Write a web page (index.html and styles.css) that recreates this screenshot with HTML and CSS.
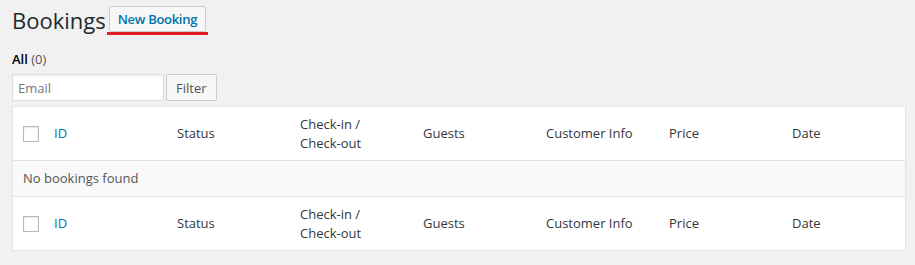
FILE: index.html
```html
<!DOCTYPE html>
<html>
<head>
<meta charset="utf-8">
<link rel="stylesheet" href="styles.css">
</head>
<body>
<div class="wrap">
  <div class="head">
    <h1 class="title">Bookings</h1>
    <a class="add-new">New Booking</a>
  </div>
  <div class="subsubsub"><span class="current">All</span> <span class="count">(0)</span></div>
  <div class="filters">
    <input class="email" type="text" placeholder="Email">
    <button class="btn">Filter</button>
  </div>
  <div class="table">
    <div class="row head-row">
      <div class="cell cb"><span class="check"></span></div>
      <div class="cell link">ID</div>
      <div class="cell">Status</div>
      <div class="cell">Check-in /<br>Check-out</div>
      <div class="cell">Guests</div>
      <div class="cell">Customer Info</div>
      <div class="cell">Price</div>
      <div class="cell">Date</div>
    </div>
    <div class="empty">No bookings found</div>
    <div class="row foot-row">
      <div class="cell cb"><span class="check"></span></div>
      <div class="cell link">ID</div>
      <div class="cell">Status</div>
      <div class="cell">Check-in /<br>Check-out</div>
      <div class="cell">Guests</div>
      <div class="cell">Customer Info</div>
      <div class="cell">Price</div>
      <div class="cell">Date</div>
    </div>
  </div>
</div>
</body>
</html>
```
FILE: styles.css
```css
html, body {
  margin: 0;
  padding: 0;
  background: #f1f1f1;
}
body {
  font-family: "Open Sans", "Noto Sans", sans-serif;
  font-size: 13px;
  color: #32373c;
}
.wrap {
  padding: 6px 9px 0 12px;
}
.head {
  display: flex;
  align-items: flex-start;
  gap: 3px;
}
.title {
  margin: 0;
  font-size: 22px;
  font-weight: 400;
  line-height: 29px;
  color: #23282d;
}
.add-new {
  position: relative;
  display: block;
  height: 24px;
  line-height: 24px;
  padding: 0 8px;
  border: 1px solid #ccc;
  border-radius: 2px;
  background: #f7f7f7;
  color: #0073aa;
  font-weight: 600;
  font-size: 13px;
  letter-spacing: -0.3px;
}
.add-new::after {
  content: "";
  position: absolute;
  left: -3px;
  right: -3px;
  bottom: -4px;
  height: 3px;
  background: #e31b23;
}
.subsubsub {
  margin-top: 15px;
  line-height: 18px;
  font-size: 13px;
}
.current {
  font-weight: 600;
  color: #000;
}
.count {
  color: #555;
}
.filters {
  display: flex;
  gap: 2px;
  margin-top: 6px;
}
.email {
  box-sizing: border-box;
  width: 152px;
  height: 27px;
  margin: 0;
  border: 1px solid #ddd;
  background: #fff;
  padding: 0 5px;
  font-family: inherit;
  font-size: 13px;
  color: #32373c;
  box-shadow: inset 0 1px 2px rgba(0,0,0,.07);
}
.email::placeholder {
  color: #72777c;
}
.btn {
  box-sizing: border-box;
  height: 27px;
  margin: 0;
  padding: 0 9px;
  border: 1px solid #ccc;
  border-radius: 2px;
  background: #f7f7f7;
  font-family: inherit;
  font-size: 13px;
  color: #555;
}
.table {
  margin-top: 5px;
  width: 894px;
  background: #fff;
  border: 1px solid #e5e5e5;
  box-sizing: border-box;
  box-shadow: 0 1px 1px rgba(0,0,0,.04);
}
.row {
  display: grid;
  grid-template-columns: 33px repeat(7, 123px);
  align-items: center;
  height: 53px;
}
.head-row {
  border-bottom: 1px solid #e1e1e1;
}
.foot-row {
  border-top: 1px solid #e1e1e1;
}
.cell {
  padding: 0 8px;
  line-height: 19px;
}
.cb {
  padding: 0 0 0 10px;
  display: flex;
  align-items: center;
}
.check {
  display: block;
  width: 14px;
  height: 14px;
  border: 1px solid #b4b9be;
  background: #fff;
  box-shadow: inset 0 1px 2px rgba(0,0,0,.1);
}
.link {
  color: #0073aa;
}
.empty {
  background: #f9f9f9;
  height: 35px;
  line-height: 35px;
  padding-left: 10px;
  color: #555;
}
```
